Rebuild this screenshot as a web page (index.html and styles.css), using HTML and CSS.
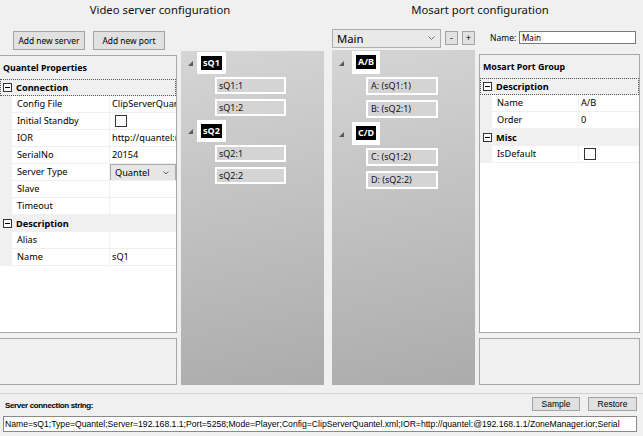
FILE: index.html
```html
<!DOCTYPE html>
<html>
<head>
<meta charset="utf-8">
<link rel="stylesheet" href="styles.css">
</head>
<body>
<div class="app">
  <div class="top">
    <section class="vs">
      <h1 class="title vs-title">Video server configuration</h1>
      <div class="vs-toolbar">
        <button class="btn">Add new server</button>
        <button class="btn">Add new port</button>
      </div>
      <div class="body">
        <div class="leftcol">
          <div class="pgrid">
            <div class="pg-head">Quantel Properties</div>
            <div class="pg-cat focus"><svg class="minus" width="9" height="9" viewBox="0 0 9 9"><rect x="0.5" y="0.5" width="8" height="8" fill="#fff" stroke="#333"/><line x1="2" y1="4.5" x2="7" y2="4.5" stroke="#000"/></svg>Connection</div>
            <div class="pg-row"><div class="pg-gut"></div><div class="pg-name">Config File</div><div class="pg-val">ClipServerQuantel.xml</div></div>
            <div class="pg-row"><div class="pg-gut"></div><div class="pg-name">Initial Standby</div><div class="pg-val"><svg class="chk" width="12" height="12" viewBox="0 0 12 12"><rect x="0.5" y="0.5" width="11" height="11" fill="#fff" stroke="#333"/></svg></div></div>
            <div class="pg-row"><div class="pg-gut"></div><div class="pg-name">IOR</div><div class="pg-val">http://quantel:@192.168.1.1/ZoneManager.ior</div></div>
            <div class="pg-row"><div class="pg-gut"></div><div class="pg-name">SerialNo</div><div class="pg-val">20154</div></div>
            <div class="pg-row"><div class="pg-gut"></div><div class="pg-name">Server Type</div><div class="pg-val combo-cell"><div class="mini-combo"><span>Quantel</span><svg width="6" height="4" viewBox="0 0 6 4"><polyline points="0.5,0.5 3,3 5.5,0.5" fill="none" stroke="#666"/></svg></div></div></div>
            <div class="pg-row"><div class="pg-gut"></div><div class="pg-name">Slave</div><div class="pg-val"></div></div>
            <div class="pg-row"><div class="pg-gut"></div><div class="pg-name">Timeout</div><div class="pg-val"></div></div>
            <div class="pg-cat"><svg class="minus" width="9" height="9" viewBox="0 0 9 9"><rect x="0.5" y="0.5" width="8" height="8" fill="#fff" stroke="#333"/><line x1="2" y1="4.5" x2="7" y2="4.5" stroke="#000"/></svg>Description</div>
            <div class="pg-row"><div class="pg-gut"></div><div class="pg-name">Alias</div><div class="pg-val"></div></div>
            <div class="pg-row"><div class="pg-gut"></div><div class="pg-name">Name</div><div class="pg-val">sQ1</div></div>
          </div>
          <div class="desc"></div>
        </div>
        <div class="tree vs-tree">
          <div class="t-parent"><span class="exp"></span><span class="p-box"><span class="p-label">sQ1</span></span></div>
          <div class="t-child first">sQ1:1</div>
          <div class="t-child">sQ1:2</div>
          <div class="t-parent"><span class="exp"></span><span class="p-box"><span class="p-label">sQ2</span></span></div>
          <div class="t-child first">sQ2:1</div>
          <div class="t-child">sQ2:2</div>
        </div>
      </div>
    </section>
    <section class="mp">
      <h1 class="title mp-title">Mosart port configuration</h1>
      <div class="mp-toolbar">
        <div class="combo"><span>Main</span><svg width="7" height="5" viewBox="0 0 7 5"><polyline points="0.5,0.5 3.5,3.5 6.5,0.5" fill="none" stroke="#777"/></svg></div>
        <button class="sbtn">-</button>
        <button class="sbtn">+</button>
        <span class="name-lbl">Name:</span>
        <div class="name-box">Main</div>
      </div>
      <div class="body">
        <div class="tree mp-tree">
          <div class="t-parent"><span class="exp"></span><span class="p-box"><span class="p-label">A/B</span></span></div>
          <div class="t-child first">A: (sQ1:1)</div>
          <div class="t-child">B: (sQ2:1)</div>
          <div class="t-parent"><span class="exp"></span><span class="p-box"><span class="p-label">C/D</span></span></div>
          <div class="t-child first">C: (sQ1:2)</div>
          <div class="t-child">D: (sQ2:2)</div>
        </div>
        <div class="rightcol">
          <div class="pgrid pgrid-r">
            <div class="pg-head">Mosart Port Group</div>
            <div class="pg-cat focus"><svg class="minus" width="9" height="9" viewBox="0 0 9 9"><rect x="0.5" y="0.5" width="8" height="8" fill="#fff" stroke="#333"/><line x1="2" y1="4.5" x2="7" y2="4.5" stroke="#000"/></svg>Description</div>
            <div class="pg-row"><div class="pg-gut"></div><div class="pg-name">Name</div><div class="pg-val">A/B</div></div>
            <div class="pg-row"><div class="pg-gut"></div><div class="pg-name">Order</div><div class="pg-val">0</div></div>
            <div class="pg-cat"><svg class="minus" width="9" height="9" viewBox="0 0 9 9"><rect x="0.5" y="0.5" width="8" height="8" fill="#fff" stroke="#333"/><line x1="2" y1="4.5" x2="7" y2="4.5" stroke="#000"/></svg>Misc</div>
            <div class="pg-row"><div class="pg-gut"></div><div class="pg-name">IsDefault</div><div class="pg-val"><svg class="chk" width="12" height="12" viewBox="0 0 12 12"><rect x="0.5" y="0.5" width="11" height="11" fill="#fff" stroke="#333"/></svg></div></div>
          </div>
          <div class="desc desc-r"></div>
        </div>
      </div>
    </section>
  </div>
  <div class="bottom">
    <div class="bot-row">
      <span class="conn-lbl">Server connection string:</span>
      <button class="bbtn sample">Sample</button>
      <button class="bbtn restore">Restore</button>
    </div>
    <div class="conn-box">Name=sQ1;Type=Quantel;Server=192.168.1.1;Port=5258;Mode=Player;Config=ClipServerQuantel.xml;IOR=http://quantel:@192.168.1.1/ZoneManager.ior;Serial</div>
  </div>
</div>
</body>
</html>
```

FILE: styles.css
```css
* { box-sizing: border-box; }
html, body { margin: 0; padding: 0; }
body {
  background: #f0f0f0;
  font-family: "Noto Sans", "Open Sans", sans-serif;
  color: #000;
  width: 643px;
  height: 436px;
  overflow: hidden;
}
.app { display: flex; flex-direction: column; height: 436px; }
.top { display: flex; height: 393px; }

.vs { width: 324px; display: flex; flex-direction: column; margin-right: 8px; }
.mp { width: 308px; display: flex; flex-direction: column; }

.title {
  height: 28px;
  margin: 0;
  font-weight: normal;
  font-size: 11.3px;
  line-height: 20px;
  text-align: center;
  color: #111;
}
.vs-title { padding-right: 4px; }
.mp-title { padding-right: 12px; }

.vs-toolbar { height: 23px; display: flex; gap: 8px; padding: 3px 0 0 13px; }
.btn {
  width: 72px; height: 19px; padding: 0;
  background: #e1e1e1; border: 1px solid #a3a3a3;
  font-family: "Noto Sans", sans-serif; font-size: 8.4px; color: #000;
}

.body { flex: 1; display: flex; gap: 4px; margin-bottom: 8px; }
.leftcol { width: 177px; display: flex; flex-direction: column; gap: 5px; }
.rightcol { width: 161px; display: flex; flex-direction: column; gap: 5px; }

.pgrid {
  flex: 1; margin-top: 4px;
  background: #fff;
  border: 1px solid #a8a8a8; border-left: none;
  overflow: hidden;
}
.pgrid-r { margin-top: 4px; border-left: 1px solid #a8a8a8; }
.desc { height: 47px; background: #f0f0f0; border: 1px solid #a8a8a8; border-left: none; }
.desc-r { border-left: 1px solid #a8a8a8; }

.pg-head {
  height: 23px; line-height: 23px;
  padding-left: 3px;
  font-weight: bold; font-size: 8.9px;
  background: #f0f0f0;
}
.pg-cat {
  height: 17px; display: flex; align-items: center;
  background: #f0f0f0;
  font-weight: bold; font-size: 9.2px;
  padding-left: 3px;
}
.pg-cat .minus { margin-right: 4px; flex: none; }
.focus { outline: 1px dotted #555; outline-offset: -1px; }
.pg-row { display: flex; height: 17px; font-size: 9.2px; }
.pg-gut { width: 12px; background: #f0f0f0; flex: none; }
.pg-name {
  width: 98px; flex: none;
  border-right: 1px solid #f0f0f0; border-bottom: 1px solid #f0f0f0;
  padding-left: 5px; line-height: 16px; white-space: nowrap; overflow: hidden;
}
.pgrid-r .pg-name { width: 87px; }
.pg-val {
  flex: 1; min-width: 0;
  border-bottom: 1px solid #f0f0f0;
  padding-left: 2px; line-height: 16px; white-space: nowrap; overflow: hidden;
}
.pg-val .chk { margin: 2px 0 0 3px; display: block; }
.combo-cell { padding: 0; }
.mini-combo {
  height: 17px; display: flex; align-items: center; justify-content: space-between;
  background: #e6e6e6; border: 1px solid #acacac;
  padding: 0 6px 0 4px;
}

.tree {
  width: 143px;
  background: linear-gradient(168deg, #d5d5d5 0%, #c4c4c4 40%, #ababab 100%);
  padding-top: 1px;
  font-size: 9px;
}
.t-parent { height: 21px; display: flex; align-items: center; }
.vs-tree .t-parent { padding-left: 7px; }
.mp-tree .t-parent { padding-left: 7px; height: 22px; }
.exp {
  width: 0; height: 0; flex: none;
  border-left: 5px solid transparent; border-bottom: 5px solid #5a5a5a;
  margin-top: 2px;
}
.vs-tree .exp { margin-right: 4px; }
.mp-tree .exp { margin-right: 8px; }
.p-box { background: #fff; padding: 4px; display: flex; }
.mp-tree .p-box { padding: 4px 4px 5px; }
.p-label {
  background: #000; color: #fff;
  font-weight: bold; font-size: 9px;
  height: 14px; line-height: 14px; padding: 0 2px;
}
.t-child {
  margin: 5px 0 0 34px;
  width: 71px; height: 17px;
  background: #d4d4d4; border: 2px solid #fff;
  padding-left: 2px; line-height: 13px; color: #111;
}
.t-child.first { margin-top: 4px; }
.t-child + .t-parent { margin-top: 4px; }
.mp-tree .t-child { width: 72px; height: 18px; line-height: 14px; padding-left: 3px; }

.mp-toolbar { height: 22px; display: flex; align-items: flex-start; }
.combo {
  margin-top: 1px;
  width: 109px; height: 19px;
  display: flex; align-items: center; justify-content: space-between;
  background: #e9e9e9; border: 1px solid #adadad;
  padding: 0 5px 0 4px;
  font-size: 11.3px;
}
.sbtn {
  margin: 3px 0 0 4px;
  width: 13px; height: 14px; padding: 0;
  background: #e1e1e1; border: 1px solid #a3a3a3;
  font-family: "Liberation Sans", sans-serif; font-size: 9px; line-height: 11px; color: #000;
}
.name-lbl { margin: 3px 0 0 15px; width: 29px; font-size: 8.5px; line-height: 14px; }
.name-box {
  margin-top: 3px;
  width: 117px; height: 13px;
  background: #fff; border: 1px solid #7a7a7a;
  font-size: 8.1px; line-height: 11px; padding-left: 2px;
}

.bottom {
  height: 43px;
  border-top: 1px solid #d2d2d2;
  padding: 3px 6px 0 3px;
  display: flex; flex-direction: column;
  font-family: "Liberation Sans", sans-serif;
}
.bot-row { display: flex; align-items: center; height: 14px; margin-bottom: 5px; }
.conn-lbl { padding-left: 2px; font-weight: bold; font-size: 8px; letter-spacing: -0.35px; margin-top: 2px; }
.bbtn {
  height: 14px; padding: 0;
  background: #e1e1e1; border: 1px solid #a3a3a3;
  font-family: "Liberation Sans", sans-serif; font-size: 8.5px; color: #000;
}
.sample { margin-left: auto; width: 48px; }
.restore { margin-left: 8px; width: 49px; }
.conn-box {
  width: 634px; height: 16px;
  background: #fff; border: 1px solid #8a8a8a;
  font-size: 8.65px; line-height: 14px; padding-left: 1px;
  white-space: nowrap; overflow: hidden;
}
```
